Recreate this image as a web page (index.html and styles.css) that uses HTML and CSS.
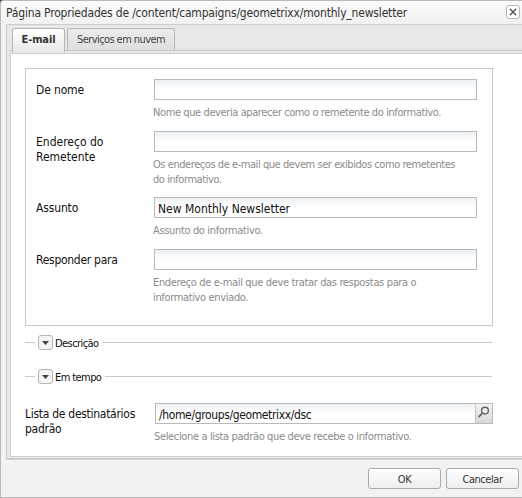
FILE: index.html
```html
<!DOCTYPE html>
<html lang="pt-BR">
<head>
<meta charset="utf-8">
<title>Página Propriedades</title>
<link rel="stylesheet" href="styles.css">
</head>
<body>
<div class="dialog">
  <header class="titlebar">
    <h1 class="title">Página Propriedades de /content/campaigns/geometrixx/monthly_newsletter</h1>
    <button class="close" aria-label="Fechar"><svg width="8" height="8" viewBox="0 0 8 8"><path d="M.8.8 7.2 7.2M7.2.8.8 7.2" stroke="#555" stroke-width="1.5"/></svg></button>
  </header>
  <main class="panel">
    <nav class="tabs">
      <div class="tab active"><span>E-mail</span></div>
      <div class="tab"><span>Serviços em nuvem</span></div>
    </nav>
    <div class="content">
      <section class="group">
        <div class="row short"><div class="label">De nome</div><div class="control"><div class="input"></div><p class="hint">Nome que deveria aparecer como o remetente do informativo.</p></div></div>
        <div class="row tall"><div class="label wide">Endereço do<br>Remetente</div><div class="control"><div class="input"></div><p class="hint sender">Os endereços de e-mail que devem ser exibidos como remetentes<br>do informativo.</p></div></div>
        <div class="row short"><div class="label">Assunto</div><div class="control"><div class="input"><span class="value">New Monthly Newsletter</span></div><p class="hint loose">Assunto do informativo.</p></div></div>
        <div class="row"><div class="label tight">Responder para</div><div class="control"><div class="input"></div><p class="hint loose">Endereço de e-mail que deve tratar das respostas para o<br>informativo enviado.</p></div></div>
      </section>
      <div class="legend"><span class="toggle"><svg width="7" height="4" viewBox="0 0 7 4"><path d="M0 0h7L3.5 4z" fill="#444"/></svg></span><span class="name">Descrição</span></div>
      <div class="legend second"><span class="toggle"><svg width="7" height="4" viewBox="0 0 7 4"><path d="M0 0h7L3.5 4z" fill="#444"/></svg></span><span class="name">Em tempo</span></div>
      <div class="row list"><div class="label tight">Lista de destinatários<br>padrão</div><div class="control"><div class="input"><span class="value path">/home/groups/geometrixx/dsc</span><span class="search"><svg width="13" height="13" viewBox="0 0 13 13"><circle cx="8" cy="4.6" r="3.4" fill="#eee" stroke="#666" stroke-width="1.4"/><path d="M5.4 7.2 2 10.6" stroke="#666" stroke-width="1.8" stroke-linecap="round"/></svg></span></div><p class="hint loose">Selecione a lista padrão que deve recebe o informativo.</p></div></div>
    </div>
  </main>
  <footer class="actions"><button class="button">OK</button><button class="button">Cancelar</button></footer>
</div>
</body>
</html>
```
FILE: styles.css
```css
* { box-sizing: border-box; }
body { margin: 0; background: #4b4f52; font-family: "DejaVu Sans Condensed", "DejaVu Sans", sans-serif; font-stretch: condensed; color: #111; overflow: hidden; }
.dialog { width: 522px; height: 498px; background: #f2f2f2; border: solid #b9b9b9; border-width: 1px 0 1px 1px; border-top-left-radius: 4px; display: flex; flex-direction: column; overflow: hidden; }
.titlebar { height: 23px; flex: none; display: flex; justify-content: space-between; align-items: flex-start; padding: 4px 2px 0 5px; background: linear-gradient(#fbfbfb, #f1f1f1); }
.title { margin: 0; font-size: 12px; line-height: 17px; font-weight: 400; letter-spacing: -0.18px; color: #333; white-space: nowrap; }
.close { width: 14px; height: 14px; padding: 0; border: 1px solid #b5b5b5; border-radius: 3px; background: #fff; display: flex; align-items: center; justify-content: center; }
.panel { margin-left: 5px; height: 436px; flex: none; border: solid #cdcdcd; border-width: 1px 0 2px 1px; background: #e7e7e7; padding: 3px 0 2px 3px; }
.tabs { height: 23px; display: flex; gap: 2px; padding-left: 2px; border-bottom: 1px solid #c9c9c9; }
.tab { height: 22px; border: 1px solid #b6b6b6; border-bottom: 0; border-radius: 3px 3px 0 0; background: linear-gradient(#ececec, #dedede); color: #444; font-size: 11px; line-height: 22px; letter-spacing: -0.58px; width: 108px; text-align: center; white-space: nowrap; }
.active { height: 24px; width: 53px; background: linear-gradient(#fff, #e9e9e9); color: #333; font-weight: 700; letter-spacing: -0.1px; }
.content { margin-top: 2px; height: 404px; background: #fff; border: solid #cfcfcf; border-width: 1px 0 1px 1px; padding: 14px 0 0 14px; }
.group { width: 468px; height: 258px; border: 1px solid #c9c9c9; padding: 10px 0 0 10px; }
.row { display: flex; white-space: nowrap; }
.short { height: 52px; }
.tall { height: 66px; }
.label { width: 118px; flex: none; padding-top: 4px; font-size: 12px; line-height: 15px; letter-spacing: -0.15px; }
.wide { letter-spacing: 0; }
.tight { letter-spacing: -0.28px; }
.control { width: 323px; }
.input { height: 21px; border: 1px solid #b7bbbd; background: linear-gradient(#edf1f3, #fff 50%); display: flex; justify-content: space-between; }
.value { padding-left: 3px; font-size: 12px; line-height: 23px; height: 19px; }
.path { letter-spacing: -0.37px; }
.hint { margin: 5px 0 0 -1px; font-size: 11px; line-height: 15px; letter-spacing: -0.4px; color: #8b8b8b; }
.sender { letter-spacing: -0.44px; }
.loose { letter-spacing: -0.35px; }
.legend { height: 15px; margin-top: 9px; width: 467px; display: flex; align-items: center; font-size: 11px; }
.legend::before { content: ""; width: 10px; height: 1px; background: #c9c9c9; margin-right: 3px; }
.legend::after { content: ""; flex: 1; height: 1px; background: #c9c9c9; margin-left: 4px; }
.name { letter-spacing: -0.58px; padding-top: 1px; }
.second { margin-top: 19px; }
.toggle { width: 15px; height: 15px; flex: none; border: 1px solid #b5b5b5; border-radius: 3px; background: #f5f5f5; display: flex; align-items: center; justify-content: center; margin-right: 2px; }
.list { margin-top: 19px; }
.list .label { width: 130px; }
.list .control { width: 338px; }
.search { width: 17px; border-left: 1px solid #c5c5c5; background: linear-gradient(#f4f4f4, #d8d8d8); padding: 2px 1px; line-height: 0; }
.actions { display: flex; justify-content: flex-end; gap: 5px; padding: 8px 3px 0 0; }
.button { width: 73px; height: 21px; padding: 1px 0 0; border: 1px solid #aaa; border-radius: 3px; background: linear-gradient(#fff, #eee); font: 11px "DejaVu Sans Condensed", "DejaVu Sans", sans-serif; font-stretch: condensed; letter-spacing: -0.45px; color: #333; }
```
